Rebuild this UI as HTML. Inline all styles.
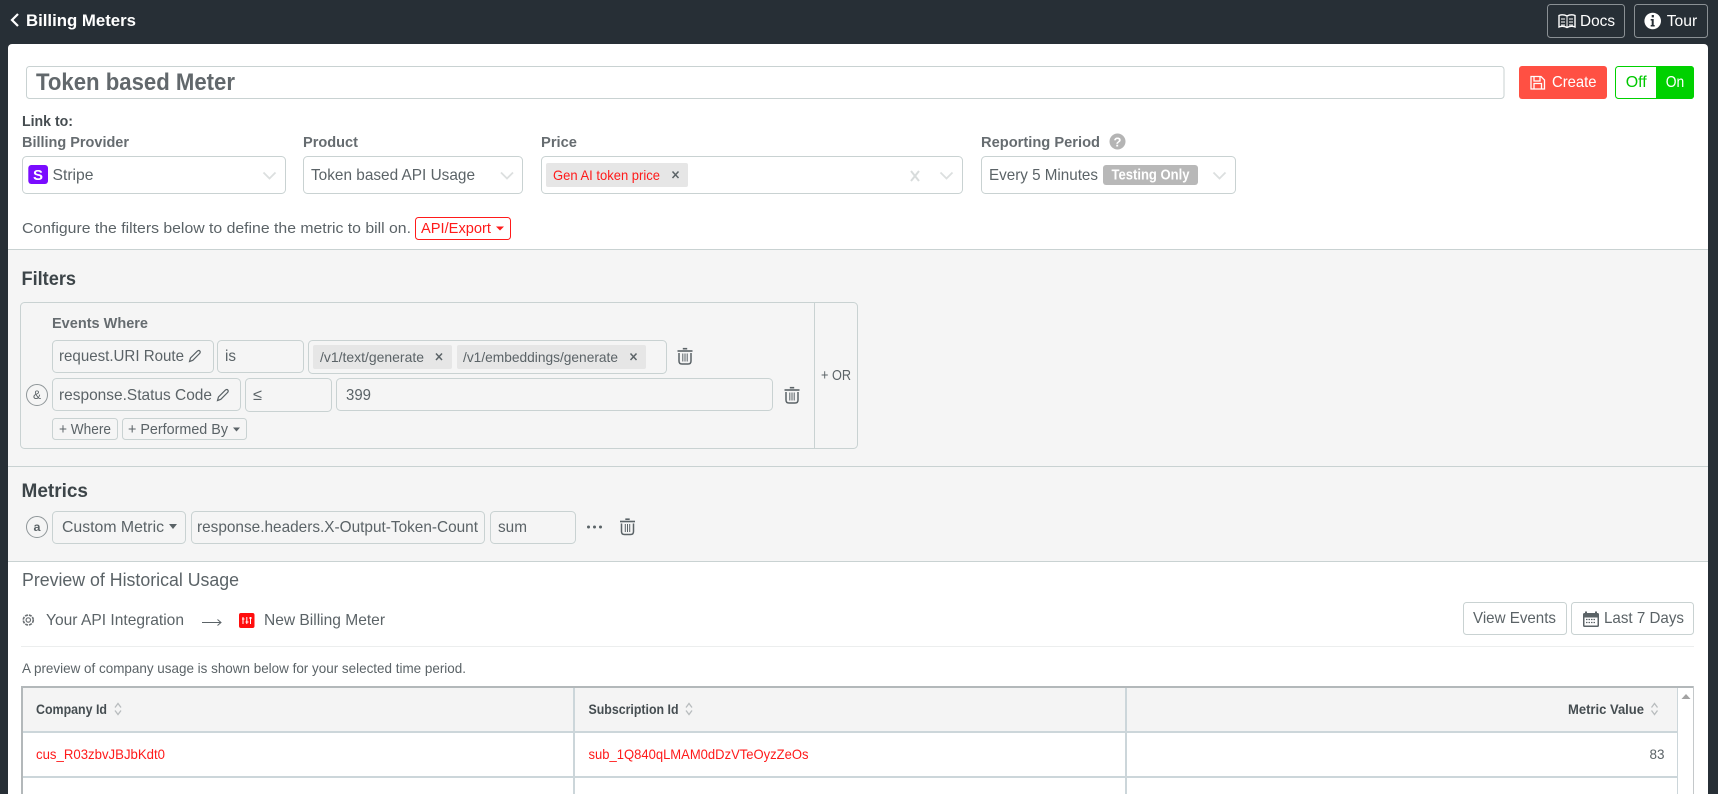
<!DOCTYPE html>
<html lang="en">
<head>
<meta charset="utf-8">
<title>Billing Meters</title>
<style>
html,body{margin:0;padding:0;background:#272f36;width:1718px;height:794px;overflow:hidden}
svg{display:block}
text{font-family:"Liberation Sans",sans-serif;font-size:15px;fill:#5b6367;white-space:pre}
.b{font-weight:bold}
.lb{font-weight:bold;fill:#666c70;font-size:15px}
.box{fill:none;stroke:#c9d2d2;stroke-width:1}
.fld{fill:#f5f5f5;stroke:#c9d2d2;stroke-width:1}
.ic{fill:none;stroke:#5b6367;stroke-width:1.2}
.hdr{fill:#454d51;font-weight:bold;font-size:14px}
.red{fill:#ff1a1a;font-size:14px}
.f16{font-size:16px}
.chev{fill:none;stroke:#dcdfdf;stroke-width:1.800}
</style>
</head>
<body>
<svg width="1718" height="794" viewBox="0 0 1718 794" xmlns="http://www.w3.org/2000/svg">
<!-- top bar -->
<rect width="1718" height="794" fill="#272f36"/>
<path d="M18 14l-6 6 6 6" fill="none" stroke="#fff" stroke-width="2.200"/>
<text x="26" y="26" class="b" style="fill:#fff;font-size:17px" textLength="110" lengthAdjust="spacingAndGlyphs">Billing Meters</text>
<rect x="1547.500" y="4.500" width="77" height="33" rx="3" fill="none" stroke="#8a9094"/>
<path d="M1559 15.500q4-1.500 8 .5q4-2 8-.5v11.500q-4-1.500-8 .5q-4-2-8-.5z" fill="none" stroke="#fff" stroke-width="1.400"/>
<path d="M1567 16v12M1561 19h4M1561 22h4M1561 25h4M1569 19h4M1569 22h4M1569 25h4" stroke="#fff" stroke-width="1"/>
<text x="1580" y="26" style="fill:#fff;font-size:16px" textLength="35" lengthAdjust="spacingAndGlyphs">Docs</text>
<rect x="1634.500" y="4.500" width="73" height="33" rx="3" fill="none" stroke="#8a9094"/>
<circle cx="1652.700" cy="21" r="8.300" fill="#fff"/>
<path d="M1650.700 19h3v6h1v1.500h-4V25h1v-4.500h-1zM1651.700 15h2.200v2.400h-2.200z" fill="#272f36"/>
<text x="1666.700" y="26" style="fill:#fff;font-size:16px" textLength="30.500" lengthAdjust="spacingAndGlyphs">Tour</text>

<!-- card -->
<path d="M8 48a4 4 0 0 1 4-4H1704a4 4 0 0 1 4 4V794H8z" fill="#fff"/>

<!-- title row -->
<rect x="26.500" y="66.500" width="1477.500" height="32" rx="3" fill="#fff" stroke="#c9d2d2"/>
<text x="36" y="90" class="b" style="font-size:24.500px;fill:#62686c" textLength="199" lengthAdjust="spacingAndGlyphs">Token based Meter</text>
<rect x="1519" y="66" width="88" height="33" rx="3" fill="#ff5043"/>
<path d="M1531 76.500h10l3.500 3.500v9h-13.500zM1534 76.500v4.500h6v-4.500M1534 89v-5.500h7.500v5.500" fill="none" stroke="#fff" stroke-width="1.300"/>
<text x="1552" y="87" style="fill:#fff;font-size:16px" textLength="44.500" lengthAdjust="spacingAndGlyphs">Create</text>
<path d="M1656 66h35a3 3 0 0 1 3 3v27a3 3 0 0 1-3 3h-35z" fill="#00d100"/>
<rect x="1615.500" y="66.500" width="78" height="32" rx="3" fill="none" stroke="#00d100"/>
<text x="1625.700" y="87" style="fill:#00c800;font-size:16px" textLength="21" lengthAdjust="spacingAndGlyphs">Off</text>
<text x="1665.700" y="87" style="fill:#fff;font-size:16px" textLength="18.500" lengthAdjust="spacingAndGlyphs">On</text>

<!-- link to -->
<text x="22" y="126" class="b" textLength="51" lengthAdjust="spacingAndGlyphs" style="fill:#454c50">Link to:</text>
<text x="22" y="147" class="lb" textLength="107" lengthAdjust="spacingAndGlyphs">Billing Provider</text>
<text x="303" y="147" class="lb" textLength="55" lengthAdjust="spacingAndGlyphs">Product</text>
<text x="541" y="147" class="lb" textLength="36" lengthAdjust="spacingAndGlyphs">Price</text>
<text x="981" y="147" class="lb" textLength="119" lengthAdjust="spacingAndGlyphs">Reporting Period</text>
<circle cx="1117.500" cy="141.500" r="8" fill="#b4b4b4"/>
<text x="1113.500" y="146.500" class="b" style="fill:#fff;font-size:13px">?</text>

<!-- billing provider select -->
<rect x="22.500" y="156.500" width="263" height="37" rx="4" fill="#fff" stroke="#c9d2d2"/>
<rect x="28.300" y="165" width="19.700" height="19" rx="3" fill="#7a0cff"/>
<text x="33" y="180" class="b" style="fill:#fff;font-size:15px" textLength="10" lengthAdjust="spacingAndGlyphs">S</text>
<text x="52.500" y="180" class="f16" textLength="41" lengthAdjust="spacingAndGlyphs">Stripe</text>
<path class="chev" d="M263.500 172.500l6 6 6-6"/>

<!-- product select -->
<rect x="303.500" y="156.500" width="219" height="37" rx="4" fill="#fff" stroke="#c9d2d2"/>
<text x="311" y="180" class="f16" textLength="164" lengthAdjust="spacingAndGlyphs">Token based API Usage</text>
<path class="chev" d="M501 172.500l6 6 6-6"/>

<!-- price select -->
<rect x="541.500" y="156.500" width="421" height="37" rx="4" fill="#fff" stroke="#c9d2d2"/>
<rect x="546" y="163" width="142" height="24" rx="2" fill="#e6e6e6"/>
<text x="553" y="180" class="red" textLength="107" lengthAdjust="spacingAndGlyphs">Gen AI token price</text>
<path d="M672.500 171.500l6 6.500M678.500 171.500l-6 6.500" stroke="#5b6367" stroke-width="1.500"/>
<path d="M911 171l8 10M919 171l-8 10" stroke="#d8dcdc" stroke-width="2"/>
<path class="chev" d="M940.500 172.500l6 6 6-6"/>

<!-- reporting select -->
<rect x="981.500" y="156.500" width="254" height="37" rx="4" fill="#fff" stroke="#c9d2d2"/>
<text x="989" y="180" class="f16" textLength="109" lengthAdjust="spacingAndGlyphs">Every 5 Minutes</text>
<rect x="1103" y="165" width="95" height="20" rx="3" fill="#b8b8b8"/>
<text x="1111.500" y="179.500" class="b" style="fill:#fff;font-size:14.500px" textLength="78" lengthAdjust="spacingAndGlyphs">Testing Only</text>
<path class="chev" d="M1213.500 172.500l6 6 6-6"/>

<!-- configure -->
<text x="22" y="233" style="font-size:15px" textLength="389" lengthAdjust="spacingAndGlyphs">Configure the filters below to define the metric to bill on.</text>
<rect x="415.500" y="217.500" width="95" height="22" rx="3" fill="#fff" stroke="#ff1a1a"/>
<text x="421" y="233" style="fill:#ff1a1a;font-size:15px" textLength="70" lengthAdjust="spacingAndGlyphs">API/Export</text>
<path d="M496 226.500h8l-4 4z" fill="#ff1a1a"/>

<!-- grey section -->
<rect x="8" y="249" width="1700" height="312" fill="#f5f5f5"/>
<rect x="8" y="249" width="1700" height="1" fill="#c9d2d2"/>
<rect x="8" y="466" width="1700" height="1" fill="#c9d2d2"/>
<rect x="8" y="561" width="1700" height="1" fill="#c9d2d2"/>

<!-- filters -->
<text x="21.500" y="285" class="b" style="font-size:19px;fill:#3d4549" textLength="54.500" lengthAdjust="spacingAndGlyphs">Filters</text>
<rect x="20.500" y="302.500" width="837" height="146" rx="4" fill="none" stroke="#c9d2d2"/>
<rect x="814" y="303" width="1" height="145" fill="#c9d2d2"/>
<text x="52" y="328" class="lb" textLength="96" lengthAdjust="spacingAndGlyphs">Events Where</text>

<rect class="fld" x="52.500" y="340.500" width="161" height="32" rx="4"/>
<text x="59" y="361" class="f16" textLength="125" lengthAdjust="spacingAndGlyphs">request.URI Route</text>
<path d="M189.500 361.500l1-3.500 7-7q1.500-1 2.300 0t0 2.300l-7 7z" class="ic"/>
<rect class="fld" x="217.500" y="340.500" width="86" height="32" rx="4"/>
<text x="225" y="361" class="f16" textLength="11" lengthAdjust="spacingAndGlyphs">is</text>
<rect class="fld" x="308.500" y="340.500" width="358" height="33" rx="4"/>
<rect x="313" y="345" width="139" height="24" rx="2" fill="#e6e6e6"/>
<text x="320" y="362" style="font-size:14px" textLength="104" lengthAdjust="spacingAndGlyphs">/v1/text/generate</text>
<path d="M436 353.500l6 6.500M442 353.500l-6 6.500" stroke="#5b6367" stroke-width="1.500"/>
<rect x="457" y="345" width="189" height="24" rx="2" fill="#e6e6e6"/>
<text x="463" y="362" style="font-size:14px" textLength="155" lengthAdjust="spacingAndGlyphs">/v1/embeddings/generate</text>
<path d="M630.500 353.500l6 6.500M636.500 353.500l-6 6.500" stroke="#5b6367" stroke-width="1.500"/>
<g transform="translate(685 356.500)" fill="none" stroke="#5b6367" stroke-width="1.500">
<path d="M-7.500-5.500h15" stroke-width="1.600"/><path d="M-2.200-7.800h4.400" stroke-width="1.600"/>
<path d="M-6-3.500v8q0 3 3 3h6q3 0 3-3v-8"/><path d="M-2.200-3v8M0-3v8M2.200-3v8" stroke-width="1"/>
</g>

<circle cx="37" cy="395" r="10.500" fill="#f5f5f5" stroke="#8f9699"/>
<text x="33" y="399" style="font-size:12px" textLength="8" lengthAdjust="spacingAndGlyphs">&amp;</text>
<rect class="fld" x="52.500" y="378.500" width="188" height="32" rx="4"/>
<text x="59" y="400" class="f16" textLength="153" lengthAdjust="spacingAndGlyphs">response.Status Code</text>
<path d="M217.500 400.500l1-3.500 7-7q1.500-1 2.300 0t0 2.300l-7 7z" class="ic"/>
<rect class="fld" x="245.500" y="378.500" width="86" height="33" rx="4"/>
<text x="253" y="400" class="f16" textLength="9" lengthAdjust="spacingAndGlyphs">≤</text>
<rect class="fld" x="336.500" y="378.500" width="436" height="32" rx="4"/>
<text x="346" y="400" class="f16" textLength="25" lengthAdjust="spacingAndGlyphs">399</text>
<g transform="translate(792 395.500)" fill="none" stroke="#5b6367" stroke-width="1.500">
<path d="M-7.500-5.500h15" stroke-width="1.600"/><path d="M-2.200-7.800h4.400" stroke-width="1.600"/>
<path d="M-6-3.500v8q0 3 3 3h6q3 0 3-3v-8"/><path d="M-2.200-3v8M0-3v8M2.200-3v8" stroke-width="1"/>
</g>

<rect class="fld" x="52.500" y="418.500" width="65" height="21" rx="3"/>
<text x="59" y="434" style="font-size:15px" textLength="52" lengthAdjust="spacingAndGlyphs">+ Where</text>
<rect class="fld" x="122.500" y="418.500" width="124" height="21" rx="3"/>
<text x="128" y="434" style="font-size:15px" textLength="100" lengthAdjust="spacingAndGlyphs">+ Performed By</text>
<path d="M233 427.500h7l-3.500 4z" fill="#5b6367"/>
<text x="821" y="380" style="font-size:15px" textLength="30" lengthAdjust="spacingAndGlyphs">+ OR</text>

<!-- metrics -->
<text x="21.500" y="497" class="b" style="font-size:19.500px;fill:#3d4549" textLength="66.500" lengthAdjust="spacingAndGlyphs">Metrics</text>
<circle cx="37" cy="527" r="10.500" fill="#f5f5f5" stroke="#8f9699"/>
<text x="33.500" y="531" class="b" style="font-size:12px" textLength="7" lengthAdjust="spacingAndGlyphs">a</text>
<rect class="fld" x="52.500" y="511.500" width="133" height="32" rx="4"/>
<text x="62" y="532" class="f16" textLength="102" lengthAdjust="spacingAndGlyphs">Custom Metric</text>
<path d="M169 524h8l-4 5z" fill="#5b6367"/>
<rect class="fld" x="191.500" y="511.500" width="293" height="32" rx="4"/>
<text x="197" y="532" class="f16" textLength="281" lengthAdjust="spacingAndGlyphs">response.headers.X-Output-Token-Count</text>
<rect class="fld" x="490.500" y="511.500" width="85" height="32" rx="4"/>
<text x="498" y="532" class="f16" textLength="29" lengthAdjust="spacingAndGlyphs">sum</text>
<circle cx="588.500" cy="527" r="1.500" fill="#5b6367"/><circle cx="594.500" cy="527" r="1.500" fill="#5b6367"/><circle cx="600.500" cy="527" r="1.500" fill="#5b6367"/>
<g transform="translate(627.500 527)" fill="none" stroke="#5b6367" stroke-width="1.500">
<path d="M-7.500-5.500h15" stroke-width="1.600"/><path d="M-2.200-7.800h4.400" stroke-width="1.600"/>
<path d="M-6-3.500v8q0 3 3 3h6q3 0 3-3v-8"/><path d="M-2.200-3v8M0-3v8M2.200-3v8" stroke-width="1"/>
</g>

<!-- preview -->
<text x="22" y="586" style="font-size:18px" textLength="217" lengthAdjust="spacingAndGlyphs">Preview of Historical Usage</text>
<circle cx="28.300" cy="620" r="5" fill="none" stroke="#6a6f73" stroke-width="1.600" stroke-dasharray="3 1"/>
<circle cx="28.300" cy="620" r="2.200" fill="none" stroke="#6a6f73" stroke-width="1.200"/>
<text x="46" y="625" class="f16" textLength="138" lengthAdjust="spacingAndGlyphs">Your API Integration</text>
<path d="M202 622.500h19M217.500 619.500l3.500 3-3.500 3" fill="none" stroke="#5b6367" stroke-width="1"/>
<rect x="239" y="613" width="15.500" height="15" rx="2" fill="#ff0d0d"/>
<path d="M243 617v7M246.800 617v7M250.500 617v7M242 619h2.500M245.500 622h3M249 618h3" stroke="#fff" stroke-width="1"/>
<text x="264" y="625" class="f16" textLength="121" lengthAdjust="spacingAndGlyphs">New Billing Meter</text>

<rect x="1463.500" y="602.500" width="103" height="32" rx="3" fill="#fff" stroke="#c9d2d2"/>
<text x="1473" y="623" class="f16" textLength="83" lengthAdjust="spacingAndGlyphs">View Events</text>
<rect x="1571.500" y="602.500" width="122" height="32" rx="3" fill="#fff" stroke="#c9d2d2"/>
<rect x="1583" y="613" width="16" height="14" rx="1.500" fill="#5b6367"/>
<rect x="1584.500" y="617.500" width="13" height="8" fill="#fff"/>
<path d="M1586 611.500v3M1596 611.500v3" stroke="#5b6367" stroke-width="2"/>
<path d="M1586 619.500h10M1586 622.500h10" stroke="#5b6367" stroke-width="1.200" stroke-dasharray="1.500 1"/>
<text x="1604" y="623" class="f16" textLength="80" lengthAdjust="spacingAndGlyphs">Last 7 Days</text>

<rect x="21" y="646" width="1673" height="1" fill="#eceeee"/>
<text x="22" y="673" style="font-size:14px" textLength="444" lengthAdjust="spacingAndGlyphs">A preview of company usage is shown below for your selected time period.</text>

<!-- table -->
<rect x="21" y="686" width="1673" height="108" fill="#fff"/>
<rect x="22" y="688" width="1655" height="44" fill="#f4f4f4"/>
<rect x="21" y="686" width="1673" height="2" fill="#b3b8ba"/>
<rect x="21" y="686" width="2" height="108" fill="#b3b8ba"/>
<rect x="23" y="731" width="1654" height="2" fill="#ccd6da"/>
<rect x="23" y="776" width="1654" height="2" fill="#ccd6da"/>
<rect x="573" y="688" width="2" height="106" fill="#ccd6da"/>
<rect x="1125" y="688" width="2" height="106" fill="#ccd6da"/>
<rect x="1677" y="688" width="1" height="106" fill="#ccd6da"/>
<rect x="1693" y="686" width="1" height="108" fill="#c4c8ca"/>
<path d="M1681.500 699l4.500-5 4.500 5z" fill="#a3a3a3"/>

<text x="36" y="714" class="hdr" textLength="71" lengthAdjust="spacingAndGlyphs">Company Id</text>
<path d="M115 707.500l3-4 3 4M115 710.500l3 4 3-4" fill="none" stroke="#b8bcbe" stroke-width="1.300"/>
<text x="588.500" y="714" class="hdr" textLength="90" lengthAdjust="spacingAndGlyphs">Subscription Id</text>
<path d="M686 707.500l3-4 3 4M686 710.500l3 4 3-4" fill="none" stroke="#b8bcbe" stroke-width="1.300"/>
<text x="1568" y="714" class="hdr" textLength="76" lengthAdjust="spacingAndGlyphs">Metric Value</text>
<path d="M1651.500 707.500l3-4 3 4M1651.500 710.500l3 4 3-4" fill="none" stroke="#b8bcbe" stroke-width="1.300"/>

<text x="36" y="759" class="red" textLength="129" lengthAdjust="spacingAndGlyphs">cus_R03zbvJBJbKdt0</text>
<text x="588.500" y="759" class="red" textLength="220" lengthAdjust="spacingAndGlyphs">sub_1Q840qLMAM0dDzVTeOyzZeOs</text>
<text x="1649.500" y="759" style="font-size:14px" textLength="15" lengthAdjust="spacingAndGlyphs">83</text>
</svg>
</body>
</html>
